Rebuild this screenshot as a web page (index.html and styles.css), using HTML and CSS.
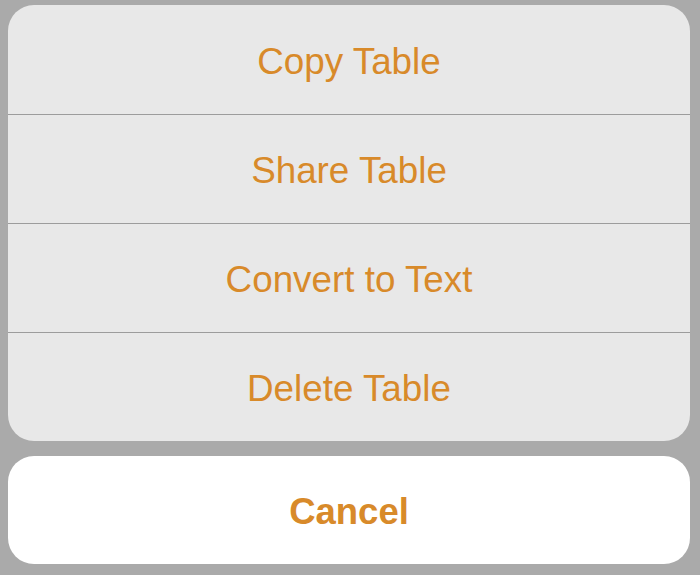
FILE: index.html
```html
<!DOCTYPE html>
<html>
<head>
<meta charset="utf-8">
<link rel="stylesheet" href="styles.css">
</head>
<body>
<div class="sheet">
  <div class="group">
    <div class="action">Copy Table</div>
    <div class="action">Share Table</div>
    <div class="action">Convert to Text</div>
    <div class="action">Delete Table</div>
  </div>
  <div class="cancel">Cancel</div>
</div>
</body>
</html>
```
FILE: styles.css
```css
html, body {
  margin: 0;
  padding: 0;
  background: #aaaaaa;
}
* {
  box-sizing: border-box;
}
body {
  width: 700px;
  height: 575px;
  overflow: hidden;
  font-family: "Liberation Sans", Arial, sans-serif;
}
.sheet {
  padding: 5px 10px 10px 8px;
  display: flex;
  flex-direction: column;
  gap: 15px;
}
.group {
  background: #e8e8e8;
  border-radius: 26px;
  overflow: hidden;
  display: flex;
  flex-direction: column;
}
.action {
  height: 109px;
  padding-top: 4px;
  display: flex;
  align-items: center;
  justify-content: center;
  color: #d88a2a;
  font-size: 36.8px;
  border-top: 1px solid #9c9c9c;
}
.action:first-child {
  border-top: none;
}
.cancel {
  background: #ffffff;
  border-radius: 26px;
  height: 108px;
  padding-top: 4px;
  display: flex;
  align-items: center;
  justify-content: center;
  color: #d88a2a;
  font-size: 36.5px;
  font-weight: bold;
}
```
